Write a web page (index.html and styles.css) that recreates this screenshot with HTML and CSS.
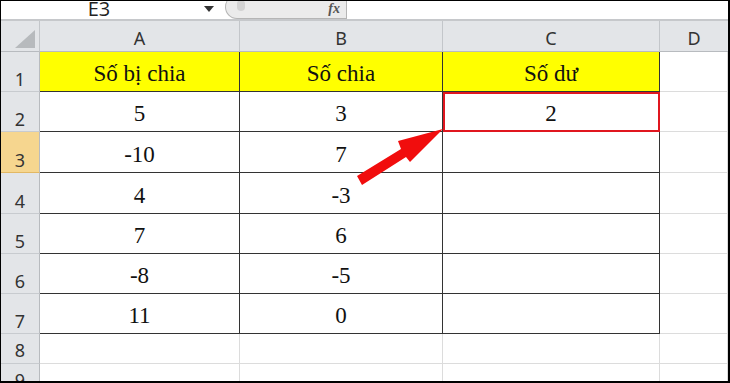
FILE: index.html
```html
<!DOCTYPE html>
<html lang="vi">
<head>
    <meta charset="UTF-8">
    <title>Số dư</title>
    <link rel="stylesheet" href="styles.css">
</head>
<body>
    <div class="frame">
        <!-- Formula bar -->
        <div class="formula-bar">
            <div class="name-box">
                <span class="cell-name">E3</span>
                <span class="dropdown"></span>
            </div>
            <div class="fx-box">
                <span class="knob"></span>
                <span class="fx">fx</span>
            </div>
        </div>

        <!-- Sheet -->
        <div class="sheet">
            <div class="corner"><span class="tri"></span></div>
            <div class="col-head">A</div>
            <div class="col-head">B</div>
            <div class="col-head">C</div>
            <div class="col-head last">D</div>

            <div class="row-head">1</div>
            <div class="cell t head">Số bị chia</div>
            <div class="cell t head">Số chia</div>
            <div class="cell t head">Số dư</div>
            <div class="cell"></div>

            <div class="row-head">2</div>
            <div class="cell t">5</div>
            <div class="cell t">3</div>
            <div class="cell t picked">2</div>
            <div class="cell"></div>

            <div class="row-head on">3</div>
            <div class="cell t">-10</div>
            <div class="cell t">7</div>
            <div class="cell t"></div>
            <div class="cell"></div>

            <div class="row-head">4</div>
            <div class="cell t">4</div>
            <div class="cell t">-3</div>
            <div class="cell t"></div>
            <div class="cell"></div>

            <div class="row-head">5</div>
            <div class="cell t">7</div>
            <div class="cell t">6</div>
            <div class="cell t"></div>
            <div class="cell"></div>

            <div class="row-head">6</div>
            <div class="cell t">-8</div>
            <div class="cell t">-5</div>
            <div class="cell t"></div>
            <div class="cell"></div>

            <div class="row-head">7</div>
            <div class="cell t">11</div>
            <div class="cell t">0</div>
            <div class="cell t"></div>
            <div class="cell"></div>

            <div class="row-head small">8</div>
            <div class="cell"></div>
            <div class="cell"></div>
            <div class="cell"></div>
            <div class="cell"></div>

            <div class="row-head small">9</div>
            <div class="cell"></div>
            <div class="cell"></div>
            <div class="cell"></div>
            <div class="cell"></div>
        </div>

        <!-- Red pointer arrow -->
        <svg class="arrow" width="730" height="383" viewBox="0 0 730 383">
            <polygon points="357,176 401,149 398,141 443,129 410,162 406,157 362,185" fill="#f10d0d"/>
        </svg>
    </div>
</body>
</html>
```

FILE: styles.css
```css
* {
    margin: 0;
    padding: 0;
    box-sizing: border-box;
}

body {
    width: 730px;
    height: 383px;
    overflow: hidden;
    background-color: white;
    font-family: "Noto Sans", "Open Sans", sans-serif;
}

.frame {
    position: relative;
    width: 730px;
    height: 383px;
    border-top: 1px solid #000;
    border-left: 1px solid #000;
    border-right: 2px solid #000;
    border-bottom: 2px solid #000;
    overflow: hidden;
}

/* formula bar */
.formula-bar {
    height: 20px;
    display: flex;
    align-items: flex-start;
    border-bottom: 2px solid #c6c8cb;
}

.name-box {
    width: 224px;
    display: flex;
    align-items: center;
    height: 16px;
}

.cell-name {
    width: 196px;
    text-align: center;
    font-size: 20px;
    line-height: 14px;
    color: #222;
    font-family: "Open Sans", sans-serif;
}

.dropdown {
    margin-left: 7px;
    width: 0;
    height: 0;
    border-left: 5px solid transparent;
    border-right: 5px solid transparent;
    border-top: 6px solid #333;
}

.fx-box {
    margin-top: -6px;
    width: 122px;
    height: 24px;
    background-color: #ebebeb;
    border: 1px solid #b5b5b5;
    border-top: none;
    border-radius: 14px 0 0 14px;
    display: flex;
    justify-content: space-between;
    align-items: center;
    padding: 4px 6px 0 11px;
}

.knob {
    width: 8px;
    height: 11px;
    margin-top: -6px;
    background-color: #d3d3d3;
    border-radius: 4px;
}

.fx {
    font-family: "Liberation Serif", serif;
    font-style: italic;
    font-weight: bold;
    font-size: 14px;
    color: #555;
}

/* grid */
.sheet {
    display: grid;
    grid-template-columns: 39px 200px 203px 217px 1fr;
    grid-template-rows: 31px 40px 40px 41px 41px 40px 40px 40px 30px 30px;
}

.corner,
.col-head {
    background-color: #e3e5e8;
    border-right: 1px solid #c3c6ca;
    border-bottom: 1px solid #b8bbbf;
}

.corner {
    position: relative;
}

.tri {
    position: absolute;
    right: 4px;
    bottom: 3px;
    width: 0;
    height: 0;
    border-left: 20px solid transparent;
    border-bottom: 18px solid #b7babd;
}

.col-head {
    display: flex;
    align-items: center;
    justify-content: center;
    padding-top: 4px;
    font-size: 18px;
    color: #333;
}

.col-head.last {
    border-right: none;
}

.row-head {
    background-color: #e3e5e8;
    border-right: 1px solid #b8bbbf;
    border-bottom: 1px solid #c8cbcf;
    display: flex;
    align-items: flex-end;
    justify-content: center;
    padding-bottom: 0;
    font-size: 18px;
    line-height: 24px;
    color: #333;
}

.row-head.small {
    line-height: 26px;
}

.row-head.on {
    background-color: #f6d68f;
    border-bottom-color: #e2b864;
}

.cell {
    border-right: 1px solid #dcdcdc;
    border-bottom: 1px solid #dcdcdc;
    display: flex;
    align-items: flex-end;
    justify-content: center;
    padding-bottom: 4px;
    font-family: "Liberation Serif", serif;
    font-size: 23px;
    line-height: 26px;
    color: #111;
}

.cell.t {
    border-right: 1px solid #333;
    border-bottom: 1px solid #333;
}

.cell.head {
    background-color: #ffff00;
}

.cell.picked {
    position: relative;
    z-index: 1;
    outline: 2px solid #e0161f;
    outline-offset: -2px;
}

.arrow {
    position: absolute;
    left: -1px;
    top: -1px;
    pointer-events: none;
}
```
